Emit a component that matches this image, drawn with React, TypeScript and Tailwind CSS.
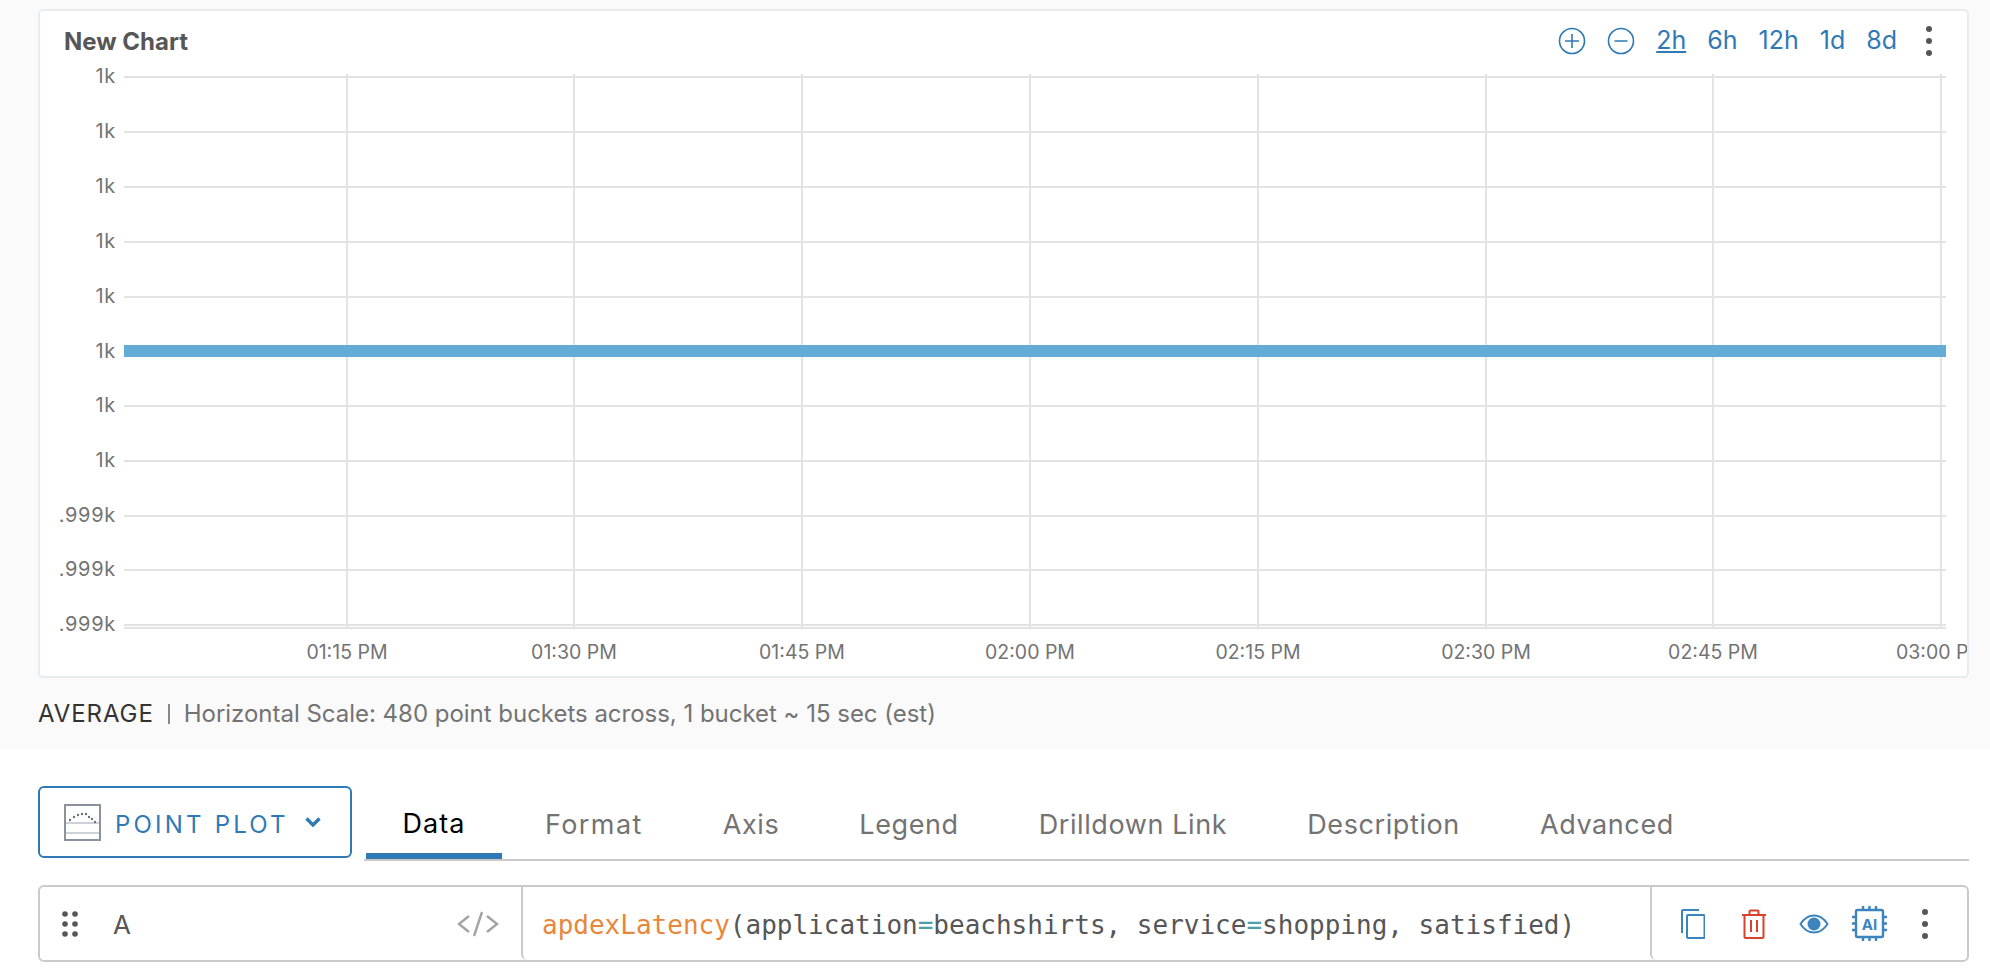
import React from "react";

const F = "font-['Inter','Noto_Sans',sans-serif]";
const hLines = [77, 132, 187, 242, 297, 352, 406, 461, 516, 570, 625];
const vLines = [347, 574, 802, 1030, 1258, 1486, 1713, 1941];
const yLabels = ["1k", "1k", "1k", "1k", "1k", "1k", "1k", "1k", ".999k", ".999k", ".999k"];
const xLabels = ["01:15 PM", "01:30 PM", "01:45 PM", "02:00 PM", "02:15 PM", "02:30 PM", "02:45 PM", "03:00 PM"];
const tabs = ["Axis", "Legend", "Drilldown Link", "Description", "Advanced"];

function Kebab() {
  return (
    <svg width="8" height="32" viewBox="0 0 8 32" className="block">
      <circle cx="4" cy="4" r="3" fill="#565656" />
      <circle cx="4" cy="16" r="3" fill="#565656" />
      <circle cx="4" cy="28" r="3" fill="#565656" />
    </svg>
  );
}

function Chart() {
  // svg origin = page (40, 64)
  const ox = 40;
  const oy = 64;
  return (
    <svg width="1928" height="612" viewBox={`${ox} ${oy} 1928 612`} className="block">
      {hLines.map((y) => (
        <line key={y} x1={124} x2={1946} y1={y} y2={y} stroke="#e3e3e3" strokeWidth="2" />
      ))}
      <line x1={124} x2={1946} y1={628} y2={628} stroke="#e3e3e3" strokeWidth="2" />
      {vLines.map((x) => (
        <line key={x} x1={x} x2={x} y1={74} y2={629} stroke="#e3e3e3" strokeWidth="2" />
      ))}
      <rect x={124} y={345} width={1822} height={12} fill="#62acd6" />
      {yLabels.map((t, i) => (
        <text key={i} x={116} y={hLines[i] + 6} textAnchor="end" fontSize="20" letterSpacing="0.7" fill="#737373" fontFamily="Inter, sans-serif">
          {t}
        </text>
      ))}
      {xLabels.map((t, i) => (
        <text key={i} x={vLines[i]} y={659} textAnchor="middle" fontSize="19.5" fill="#737373" fontFamily="Inter, sans-serif">
          {t}
        </text>
      ))}
    </svg>
  );
}

function Header() {
  return (
    <div className="flex h-[53px] items-center pl-[24px] pr-[34px] pt-[6px]">
      <div className="mt-[2px] text-[24px] font-bold text-[#565656]">New Chart</div>
      <div className="ml-auto flex items-center text-[25px] text-[#2f7ab5]">
        <svg width="28" height="28" viewBox="0 0 28 28" fill="none" stroke="#2f7ab5" strokeWidth="1.6">
          <circle cx="14" cy="14" r="12.5" />
          <path d="M14 7v14M7 14h14" />
        </svg>
        <svg width="28" height="28" viewBox="0 0 28 28" fill="none" stroke="#2f7ab5" strokeWidth="1.6" className="ml-[21px]">
          <circle cx="14" cy="14" r="12.5" />
          <path d="M7.5 14h13" />
        </svg>
        <span className="ml-[21px] underline underline-offset-2">2h</span>
        <span className="ml-[21px]">6h</span>
        <span className="ml-[21px]">12h</span>
        <span className="ml-[21px]">1d</span>
        <span className="ml-[21px]">8d</span>
        <span className="ml-[28px]"><Kebab /></span>
      </div>
    </div>
  );
}

function PlotIcon() {
  return (
    <svg width="37" height="37" viewBox="0 0 37 37" fill="none">
      <rect x="1" y="1" width="35" height="35" fill="#fff" stroke="#8a939b" strokeWidth="2" />
      <path d="M2 19h33M2 29h33" stroke="#ccd2d8" strokeWidth="2" />
      <g fill="#67727c">
        <circle cx="6" cy="16" r="1.2" /><circle cx="10" cy="13" r="1.2" /><circle cx="14" cy="11" r="1.2" />
        <circle cx="18" cy="10" r="1.2" /><circle cx="22" cy="10" r="1.2" /><circle cx="25" cy="13" r="1.2" />
        <circle cx="28" cy="15" r="1.2" /><circle cx="31" cy="18" r="1.2" />
      </g>
    </svg>
  );
}

export default function App() {
  return (
    <div className={`${F} min-h-screen w-[1990px] overflow-hidden bg-white`}>
      <div className="h-[749px] bg-[#fafafa] pl-[38px] pr-[21px] pt-[9px]">
        <div className="h-[669px] overflow-hidden rounded-[5px] border-2 border-[#e8ecf1] bg-white">
          <Header />
          <Chart />
        </div>
        <div className="mt-[21px] flex items-center text-[24px] leading-[30px]">
          <span className="tracking-[0.9px] text-[#333]">AVERAGE</span>
          <span className="ml-[14px] h-[20px] w-[2px] bg-[#888]" />
          <span className="ml-[14px] tracking-[-0.02px] text-[#737373]">Horizontal Scale: 480 point buckets across, 1 bucket ~ 15 sec (est)</span>
        </div>
      </div>

      <div className="flex pl-[38px] pr-[21px] pt-[37px]">
        <button className="flex h-[72px] w-[314px] items-center rounded-[6px] border-2 border-[#2f7ab5] pl-[24px]">
          <PlotIcon />
          <span className="ml-[14px] pt-[6px] text-[24px] tracking-[3.2px] text-[#2f7ab5]">POINT PLOT</span>
          <svg width="16" height="10" viewBox="0 0 16 10" fill="none" stroke="#2f7ab5" strokeWidth="3.4" className="ml-[16px]">
            <path d="M1.5 1.5 8 8l6.5-6.5" />
          </svg>
        </button>
        <div className="ml-[12px] flex h-[75px] flex-1 items-start border-b-2 border-[#c9c9c9] pl-[2px]">
          <div className="flex h-[73px] w-[136px] items-center justify-center border-b-[6px] border-[#2f7ab5] pt-[9px] text-[27px] tracking-[1px] text-black">Data</div>
          <div className="ml-[3px] flex">
            <div className="flex h-[73px] items-center px-[40px] pt-[6px] text-[27px] tracking-[1.4px] text-[#737373]">Format</div>
            {tabs.map((t) => (
              <div key={t} className="flex h-[73px] items-center px-[40px] pt-[6px] text-[27px] tracking-[0.6px] text-[#737373]">{t}</div>
            ))}
          </div>
        </div>
      </div>

      <div className="mx-[21px] ml-[38px] mt-[24px] flex h-[77px] rounded-[6px] border-2 border-[#cacaca]">
        <div className="flex w-[481px] items-center pl-[22px]">
          <svg width="16" height="26" viewBox="0 0 16 26" fill="#565656">
            <circle cx="3" cy="3" r="2.8" /><circle cx="13" cy="3" r="2.8" />
            <circle cx="3" cy="13" r="2.8" /><circle cx="13" cy="13" r="2.8" />
            <circle cx="3" cy="23" r="2.8" /><circle cx="13" cy="23" r="2.8" />
          </svg>
          <span className="ml-[35px] pt-[2px] text-[26px] text-[#565656]">A</span>
          <svg width="42" height="26" viewBox="0 0 42 26" fill="none" stroke="#a3a3a3" strokeWidth="2.4" className="ml-auto mr-[22px]">
            <path d="M12 5 2 13l10 8M30 5l10 8-10 8M25 1l-8 24" />
          </svg>
        </div>
        <div className="flex flex-1 items-center rounded-bl-[6px] border-l-2 border-[#cacaca] pb-0 pl-[19px] pt-[3px] font-['DejaVu_Sans_Mono',monospace] text-[26px] text-[#565656]">
          <span className="text-[#e8873a]">apdexLatency</span>(application<span className="text-[#4f9da6]">=</span>beachshirts, service<span className="text-[#4f9da6]">=</span>shopping, satisfied)
        </div>
        <div className="flex w-[317px] items-center rounded-bl-[6px] border-l-2 border-[#cacaca] pl-[29px]">
          <svg width="24" height="30" viewBox="0 0 24 30" fill="none" stroke="#3c84bd" strokeWidth="2">
            <path d="M18 1H2a1 1 0 0 0-1 1v22" />
            <rect x="6" y="6" width="17.5" height="23" rx="1" />
          </svg>
          <svg width="26" height="30" viewBox="0 0 26 30" fill="none" stroke="#d9432b" strokeWidth="2" className="ml-[36px]">
            <path d="M1 6h24M8.5 6V2.5a1 1 0 0 1 1-1h7a1 1 0 0 1 1 1V6M3.5 6v22a1 1 0 0 0 1 1h17a1 1 0 0 0 1-1V6M10 11v12M16 11v12" />
          </svg>
          <svg width="30" height="20" viewBox="0 0 30 20" fill="none" stroke="#3c84bd" strokeWidth="2" className="ml-[32px]">
            <path d="M1.5 10C5 4.5 10 1.5 15 1.5S25 4.5 28.5 10C25 15.500 20 18.500 15 18.500S5 15.500 1.500 10Z" />
            <circle cx="15" cy="10" r="6.500" fill="#3c84bd" stroke="none" />
          </svg>
          <svg width="37" height="37" viewBox="0 0 37 37" fill="none" stroke="#3c84bd" strokeWidth="2.4" className="ml-[22px]">
            <rect x="5" y="5" width="27" height="27" rx="1.500" />
            <path d="M12 1v4M18.500 1v4M25 1v4M12 32v4M18.500 32v4M25 32v4M1 12h4M1 18.500h4M1 25h4M32 12h4M32 18.500h4M32 25h4" />
            <text x="18.500" y="24.500" textAnchor="middle" fontSize="15" fontWeight="700" fill="#3c84bd" stroke="none" fontFamily="Inter, sans-serif">AI</text>
          </svg>
          <span className="ml-[33px]"><Kebab /></span>
        </div>
      </div>
    </div>
  );
}
